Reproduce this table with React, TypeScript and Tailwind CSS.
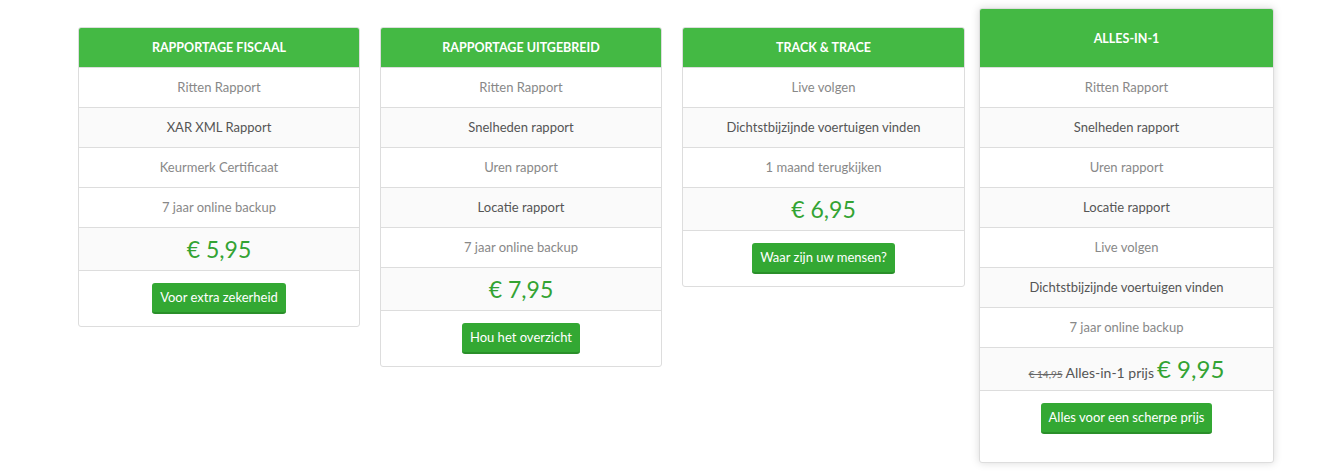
import React from "react";

type Plan = {
  title: string;
  features: string[];
  price: React.ReactNode;
  button: string;
  featured?: boolean;
  width: string;
};

const plans: Plan[] = [
  {
    title: "RAPPORTAGE FISCAAL",
    features: ["Ritten Rapport", "XAR XML Rapport", "Keurmerk Certificaat", "7 jaar online backup"],
    price: <span className="text-[23px] text-[#33a333]">€ 5,95</span>,
    button: "Voor extra zekerheid",
    width: "w-[282px]",
  },
  {
    title: "RAPPORTAGE UITGEBREID",
    features: ["Ritten Rapport", "Snelheden rapport", "Uren rapport", "Locatie rapport", "7 jaar online backup"],
    price: <span className="text-[23px] text-[#33a333]">€ 7,95</span>,
    button: "Hou het overzicht",
    width: "w-[282px]",
  },
  {
    title: "TRACK & TRACE",
    features: ["Live volgen", "Dichtstbijzijnde voertuigen vinden", "1 maand terugkijken"],
    price: <span className="text-[23px] text-[#33a333]">€ 6,95</span>,
    button: "Waar zijn uw mensen?",
    width: "w-[283px]",
  },
  {
    title: "ALLES-IN-1",
    features: [
      "Ritten Rapport",
      "Snelheden rapport",
      "Uren rapport",
      "Locatie rapport",
      "Live volgen",
      "Dichtstbijzijnde voertuigen vinden",
      "7 jaar online backup",
    ],
    price: (
      <span className="flex items-baseline justify-center gap-[3px]">
        <span className="text-[10px] text-[#666] line-through">€ 14,95</span>
        <span className="text-[14px] text-[#555]">Alles-in-1 prijs</span>
        <span className="text-[24px] text-[#33a333]">€ 9,95</span>
      </span>
    ),
    button: "Alles voor een scherpe prijs",
    featured: true,
    width: "w-[295px]",
  },
];

function Card({ plan }: { plan: Plan }) {
  const last = plan.features.length - 1;
  return (
    <div
      className={`${plan.width} shrink-0 flex flex-col border border-[#dddddd] rounded-[3px] bg-white overflow-hidden ${
        plan.featured ? "shadow-[0_0_8px_rgba(0,0,0,0.15)]" : ""
      }`}
    >
      <div
        className={`bg-[#44b944] text-white text-[12.5px] font-bold text-center flex items-center justify-center pt-[2px] ${
          plan.featured ? "h-[58px]" : "h-[39px]"
        }`}
      >
        {plan.title}
      </div>
      {plan.features.map((f, i) => {
        const light = i % 2 === 0 || i === last;
        return (
          <div
            key={i}
            className={`h-[40px] border-t border-[#dddddd] flex items-center justify-center text-[13px] ${
              light ? "bg-white text-[#888888]" : "bg-[#fafafa] text-[#555555]"
            }`}
          >
            {f}
          </div>
        );
      })}
      <div className="h-[43px] border-t border-[#dddddd] bg-[#fafafa] flex items-center justify-center">
        {plan.price}
      </div>
      <div className={`border-t border-[#dddddd] flex justify-center pt-[12px] ${plan.featured ? "pb-[28px]" : "pb-[12px]"}`}>
        <button className="h-[31px] px-[8px] bg-[#33a833] text-white text-[13px] rounded-[3px] border-b-2 border-[#2a8f2a]">
          {plan.button}
        </button>
      </div>
    </div>
  );
}

export default function App() {
  return (
    <div
      className="w-[1329px] h-[476px] bg-white flex items-start pl-[78px]"
      style={{ fontFamily: "Lato, 'Open Sans', sans-serif" }}
    >
      <div className="mt-[27px] mr-[20px]">
        <Card plan={plans[0]} />
      </div>
      <div className="mt-[27px] mr-[20px]">
        <Card plan={plans[1]} />
      </div>
      <div className="mt-[27px] mr-[14px]">
        <Card plan={plans[2]} />
      </div>
      <div className="mt-[8px]">
        <Card plan={plans[3]} />
      </div>
    </div>
  );
}
